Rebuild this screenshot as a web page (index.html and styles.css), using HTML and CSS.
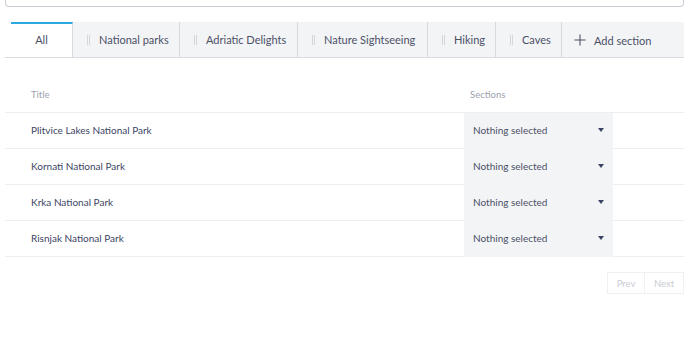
FILE: index.html
```html
<!DOCTYPE html>
<html lang="en">
<head>
    <meta charset="UTF-8">
    <meta name="viewport" content="width=device-width, initial-scale=1.0">
    <title>Sections</title>
    <link rel="stylesheet" href="styles.css">
</head>
<body>
    <div class="search-box"></div>

    <div class="tabs">
        <div class="tab active">All</div>
        <div class="tab w-parks"><span class="handle"></span>National parks</div>
        <div class="tab w-adriatic"><span class="handle"></span>Adriatic Delights</div>
        <div class="tab w-nature"><span class="handle"></span>Nature Sightseeing</div>
        <div class="tab w-hiking"><span class="handle"></span>Hiking</div>
        <div class="tab w-caves"><span class="handle"></span>Caves</div>
        <div class="tab add-tab">
            <svg width="12" height="12" viewBox="0 0 12 12"><path d="M6 0.5V11.5M0.5 6H11.5" stroke="#4b5067" stroke-width="1.1" fill="none"/></svg>
            Add section
        </div>
    </div>

    <div class="table">
        <div class="row head">
            <div class="cell title">Title</div>
            <div class="cell sections">Sections</div>
            <div class="cell rest"></div>
        </div>
        <div class="row">
            <div class="cell title">Plitvice Lakes National Park</div>
            <div class="cell select">Nothing selected<span class="caret"></span></div>
            <div class="cell rest"></div>
        </div>
        <div class="row">
            <div class="cell title">Kornati National Park</div>
            <div class="cell select">Nothing selected<span class="caret"></span></div>
            <div class="cell rest"></div>
        </div>
        <div class="row">
            <div class="cell title">Krka National Park</div>
            <div class="cell select">Nothing selected<span class="caret"></span></div>
            <div class="cell rest"></div>
        </div>
        <div class="row">
            <div class="cell title">Risnjak National Park</div>
            <div class="cell select">Nothing selected<span class="caret"></span></div>
            <div class="cell rest"></div>
        </div>
    </div>

    <div class="pager">
        <button class="prev">Prev</button>
        <button class="next">Next</button>
    </div>
</body>
</html>
```

FILE: styles.css
```css
body {
    margin: 0;
    padding: 0 5px;
    background-color: #ffffff;
    font-family: Lato, "Open Sans", sans-serif;
    color: #3c4463;
}

.search-box {
    height: 6px;
    border: 1px solid #c9ccd3;
    border-top: none;
    border-radius: 0 0 4px 4px;
}

.tabs {
    display: flex;
    margin-top: 15px;
    padding-left: 6px;
    border-bottom: 1px solid #d8dbe0;
}

.tab {
    display: flex;
    align-items: center;
    flex-shrink: 0;
    height: 35px;
    padding: 0 0 0 14px;
    background-color: #f3f4f6;
    border-right: 1px solid #d5d8de;
    font-size: 11px;
    color: #4b5067;
    box-sizing: border-box;
}

.w-parks { width: 107px; }
.w-adriatic { width: 118px; }
.w-nature { width: 130px; }
.w-hiking { width: 68px; }
.w-caves { width: 66px; }

.tab.active {
    width: 62px;
    justify-content: center;
    padding: 0 0 2px 0;
    background-color: #ffffff;
    border-top: 2px solid #2aa9df;
}

.handle {
    width: 1px;
    height: 10px;
    margin-right: 9px;
    border-left: 1px solid #d3d6db;
    border-right: 1px solid #d3d6db;
}

.add-tab {
    flex: 1;
    border-right: none;
    padding-left: 12px;
    padding-top: 1px;
}

.add-tab svg {
    margin-right: 8px;
}

.row {
    display: flex;
    height: 36px;
}

.cell {
    display: flex;
    align-items: center;
    box-sizing: border-box;
    padding-bottom: 2px;
    font-size: 10px;
}

.title {
    width: 459px;
    padding-left: 26px;
    border-bottom: 1px solid #eceef1;
}

.rest {
    flex: 1;
    border-bottom: 1px solid #eceef1;
}

.select, .sections {
    width: 149px;
    padding-left: 9px;
    padding-right: 9px;
}

.select {
    justify-content: space-between;
    background-color: #f3f4f6;
    color: #4b5067;
}

.sections {
    border-bottom: 1px solid #eceef1;
    padding-left: 6px;
}

.row.head {
    height: 55px;
}

.row.head .cell {
    align-items: flex-end;
    padding-bottom: 12px;
    color: #9ba0ad;
    font-size: 9.5px;
}

.caret {
    width: 0;
    height: 0;
    margin-right: 0;
    border-left: 3.5px solid transparent;
    border-right: 3.5px solid transparent;
    border-top: 4px solid #3c4463;
}

.pager {
    display: flex;
    justify-content: flex-end;
    margin-top: 15px;
}

.pager button {
    height: 22px;
    padding: 0;
    background-color: #ffffff;
    border: 1px solid #eff0f2;
    color: #c9ccd2;
    font-family: Lato, "Open Sans", sans-serif;
    font-size: 9.5px;
}

.pager .prev { width: 38px; }

.pager .next {
    width: 39px;
    border-left: none;
}
```
